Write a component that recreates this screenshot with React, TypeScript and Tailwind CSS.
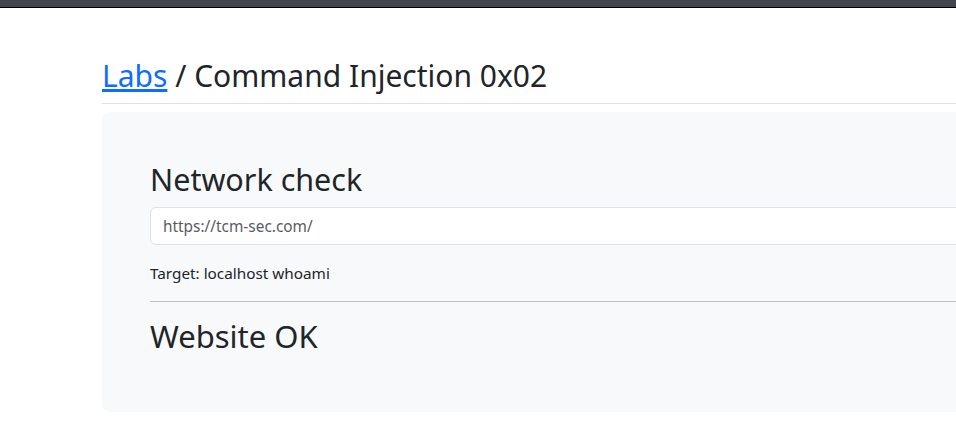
export default function App() {
  return (
    <div className="w-[956px] h-[437px] overflow-hidden bg-white font-['Noto_Sans',sans-serif] text-[#212529]">
      <div className="h-[8px] bg-[#42454e] border-b border-black" />
      <div className="pl-[102px]">
        <div className="w-[1000px]">
          <div className="mt-[50px] pb-[9px] border-b border-[#dee2e6]">
            <h2 className="text-[30px] leading-[36px] font-normal">
              <a href="#" className="text-[#0d6efd] underline">Labs</a> / Command Injection 0x02
            </h2>
          </div>
          <div className="mt-[8px] bg-[#f8f9fa] rounded-lg p-12">
            <h1 className="text-[30.5px] leading-[38.4px] mb-[9px]">Network check</h1>
            <div className="h-[38px] bg-white border border-[#dee2e6] rounded-md px-3 flex items-center text-[15.4px] text-[#595c5f]">
              https://tcm-sec.com/
            </div>
            <p className="mt-4 text-[15.3px] leading-6">Target: localhost whoami</p>
            <hr className="mt-4 mb-[15px] border-0 border-t border-[#bfc0c2]" />
            <h2 className="text-[31px] leading-[38.4px] mb-2">Website OK</h2>
          </div>
        </div>
      </div>
    </div>
  );
}
